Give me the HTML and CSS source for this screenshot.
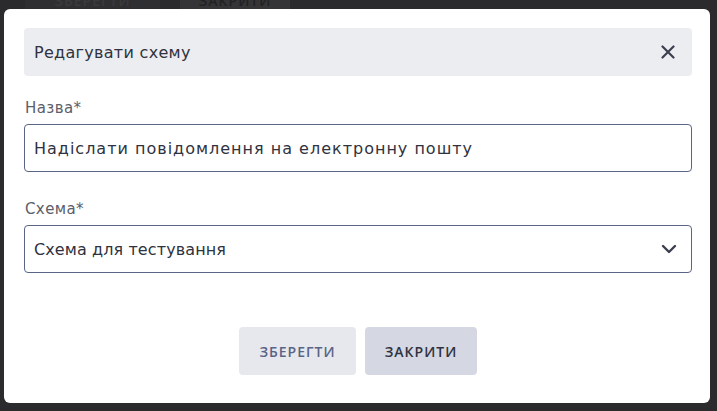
FILE: index.html
```html
<!DOCTYPE html>
<html lang="uk">

<head>
  <meta charset="UTF-8">
  <meta name="viewport" content="width=device-width, initial-scale=1.0">
  <title>Редагувати схему</title>
  <link rel="stylesheet" href="styles.css">
</head>

<body>
<div id='page_behind'>
  <div class='behind_button' id='behind_save'>ЗБЕРЕГТИ</div>
  <div class='behind_button' id='behind_close'>ЗАКРИТИ</div>
</div>

<div id='modal_window'>
  <div id='modal_header'>
    <span id='modal_title'>Редагувати схему</span>
    <button id='close_icon' title='Закрити'>
      <svg width="14" height="14" viewBox="0 0 14 14">
        <path d="M1.5 1.5 L12.5 12.5 M12.5 1.5 L1.5 12.5" stroke="#3b3f4f" stroke-width="2.2" stroke-linecap="round"/>
      </svg>
    </button>
  </div>

  <form id='edit_form'>
    <div class='form_part'>
      <label for='input_name'>Назва*</label>
      <input type='text' id='input_name' value='Надіслати повідомлення на електронну пошту'>
    </div>

    <div class='form_part'>
      <label for='input_scheme'>Схема*</label>
      <div class='select_box'>
        <select id='input_scheme'>
          <option>Схема для тестування</option>
        </select>
        <svg class='chevron' width="16" height="10" viewBox="0 0 16 10">
          <path d="M2 2 L8 8 L14 2" fill="none" stroke="#3b3f4f" stroke-width="2.4" stroke-linecap="round" stroke-linejoin="round"/>
        </svg>
      </div>
    </div>

    <div id='form_bottom'>
      <button type='button' class='modal_button' id='save_button'>ЗБЕРЕГТИ</button>
      <button type='button' class='modal_button' id='cancel_button'>ЗАКРИТИ</button>
    </div>
  </form>
</div>
</body>

</html>
```

FILE: styles.css
```css
* {
    box-sizing: border-box;
    font-family: 'DejaVu Sans', 'Open Sans', sans-serif;
}

body {
    margin: 0;
    width: 717px;
    height: 411px;
    overflow: hidden;
    background-color: #2b2b2d;
    position: relative;
}

#page_behind {
    display: flex;
    gap: 20px;
    padding-left: 25px;
    margin-top: -14px;
}

.behind_button {
    width: 135px;
    height: 24px;
    background-color: #2f2f31;
    color: #3a3a3c;
    font-family: 'Open Sans', sans-serif;
    font-size: 14px;
    font-weight: 600;
    letter-spacing: 1px;
    display: flex;
    align-items: flex-end;
    justify-content: center;
}

#behind_close {
    width: 110px;
    background-color: #353537;
    color: #222;
}

#modal_window {
    position: absolute;
    top: 9px;
    left: 4px;
    width: 706px;
    height: 394px;
    background-color: white;
    border-radius: 6px;
    padding: 19px 18px 0 20px;
}

#modal_header {
    height: 48px;
    background-color: #ecedf1;
    border-radius: 4px;
    display: flex;
    align-items: center;
    justify-content: space-between;
    padding: 0 17px 0 10px;
}

#modal_title {
    font-size: 16px;
    letter-spacing: 0.3px;
    color: #2f3240;
}

#close_icon {
    border: none;
    background: none;
    padding: 0;
    width: 14px;
    height: 14px;
    display: flex;
}

#edit_form {
    display: flex;
    flex-direction: column;
    padding-top: 23px;
    gap: 28px;
}

.form_part {
    display: flex;
    flex-direction: column;
    gap: 7px;
}

label {
    font-size: 15px;
    letter-spacing: 0.4px;
    color: #5b5e6b;
    line-height: 18px;
    padding-left: 1px;
}

input,
select {
    height: 48px;
    width: 100%;
    border: 1px solid #5a6485;
    border-radius: 4px;
    padding: 0 9px;
    font-size: 16px;
    letter-spacing: 1px;
    color: #2f3240;
    background-color: white;
    outline: none;
    appearance: none;
}

select {
    letter-spacing: 0.1px;
}

.select_box {
    position: relative;
}

.chevron {
    position: absolute;
    right: 15px;
    top: 19px;
    pointer-events: none;
}

#form_bottom {
    display: flex;
    justify-content: center;
    gap: 9px;
    margin-top: 26px;
}

.modal_button {
    height: 48px;
    border: none;
    border-radius: 4px;
    font-family: 'Open Sans', sans-serif;
    font-size: 14px;
    font-weight: 600;
    letter-spacing: 1px;
}

#save_button {
    width: 117px;
    background-color: #e7e8ee;
    color: #5a6485;
}

#cancel_button {
    width: 112px;
    background-color: #d5d7e2;
    color: #2f3240;
}
```
